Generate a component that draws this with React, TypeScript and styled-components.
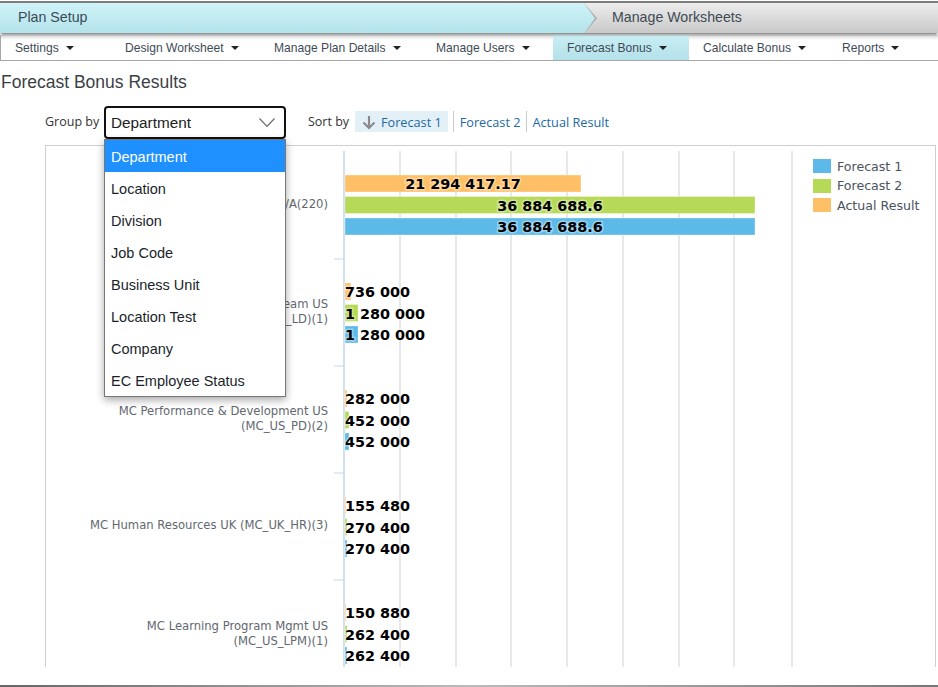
import styled, { createGlobalStyle } from "styled-components"

const GlobalStyle = createGlobalStyle`
  html, body {
    margin: 0;
    height: 687px;
    overflow: hidden;
    background: #fff;
    font-family: "Liberation Sans", Arial, sans-serif;
  }
`

const NAV_ITEMS = [
  { label: "Settings", width: 110 },
  { label: "Design Worksheet", width: 149 },
  { label: "Manage Plan Details", width: 162 },
  { label: "Manage Users", width: 131 },
  { label: "Forecast Bonus", width: 136, active: true },
  { label: "Calculate Bonus", width: 139 },
  { label: "Reports", width: 110 },
]

const GROUP_OPTIONS = [
  "Department",
  "Location",
  "Division",
  "Job Code",
  "Business Unit",
  "Location Test",
  "Company",
  "EC Employee Status",
]

const COLORS = { f1: "#5cb9e8", f2: "#b6d957", actual: "#ffbf66" }
const GRID_X = [400, 456, 511, 567, 623, 679, 734, 792]
const TICKS_Y = [259, 366, 473, 580]

const GROUPS = [
  {
    label: ["N/A(220)"],
    labelY: 208,
    top: 175,
    rows: [
      { v: "21 294 417.17", end: 581, color: COLORS.actual },
      { v: "36 884 688.6", end: 755, color: COLORS.f2 },
      { v: "36 884 688.6", end: 755, color: COLORS.f1 },
    ],
  },
  {
    label: ["MC Leadership Team US", "(MC_US_LD)(1)"],
    labelY: 308,
    top: 283,
    rows: [
      { v: "736 000", end: 351, color: COLORS.actual },
      { v: "1 280 000", end: 358, color: COLORS.f2 },
      { v: "1 280 000", end: 358, color: COLORS.f1 },
    ],
  },
  {
    label: ["MC Performance & Development US", "(MC_US_PD)(2)"],
    labelY: 415,
    top: 390,
    rows: [
      { v: "282 000", end: 347, color: COLORS.actual },
      { v: "452 000", end: 349, color: COLORS.f2 },
      { v: "452 000", end: 349, color: COLORS.f1 },
    ],
  },
  {
    label: ["MC Human Resources UK (MC_UK_HR)(3)"],
    labelY: 529,
    top: 497,
    rows: [
      { v: "155 480", end: 346, color: COLORS.actual },
      { v: "270 400", end: 347, color: COLORS.f2 },
      { v: "270 400", end: 347, color: COLORS.f1 },
    ],
  },
  {
    label: ["MC Learning Program Mgmt US", "(MC_US_LPM)(1)"],
    labelY: 630,
    top: 604,
    rows: [
      { v: "150 880", end: 346, color: COLORS.actual },
      { v: "262 400", end: 347, color: COLORS.f2 },
      { v: "262 400", end: 347, color: COLORS.f1 },
    ],
  },
]

const AXIS_X = 345
const BAR_HEIGHT = 17
const ROW_STEP = 21.5

const BarChart = () => (
  <ChartSvg viewBox="46 146 754 521" width={754} height={521}>
    {GRID_X.map((x) => (
      <line key={x} x1={x} x2={x} y1={151} y2={667} stroke="#dfe1e3" strokeWidth={1.5} />
    ))}
    <line x1={344} x2={344} y1={151} y2={667} stroke="#c5d7e6" strokeWidth={1.5} />
    {TICKS_Y.map((y) => (
      <line key={y} x1={334} x2={344} y1={y} y2={y} stroke="#c5d7e6" strokeWidth={1} />
    ))}
    {GROUPS.map((group) => (
      <g key={group.top}>
        {group.label.map((text, i) => (
          <AxisLabel key={text} x={328} y={group.labelY + i * 15}>
            {text}
          </AxisLabel>
        ))}
        {group.rows.map((row, i) => {
          const y = group.top + i * ROW_STEP
          const wide = row.end > 400
          return (
            <g key={i}>
              <BarRect x={AXIS_X} y={y} width={row.end - AXIS_X} height={BAR_HEIGHT} fill={row.color} />
              <BarValue
                x={wide ? (AXIS_X + row.end) / 2 : AXIS_X}
                y={y + 14.3}
                textAnchor={wide ? "middle" : "start"}
              >
                {row.v}
              </BarValue>
            </g>
          )
        })}
      </g>
    ))}
  </ChartSvg>
)

export default function App() {
  return (
    <Page>
      <GlobalStyle />
      <Steps>
        <StepActive>Plan Setup</StepActive>
        <StepNext>Manage Worksheets</StepNext>
      </Steps>
      <Nav>
        {NAV_ITEMS.map((item) => (
          <NavItem key={item.label} $width={item.width} $active={item.active}>
            {item.label}
            <Caret />
          </NavItem>
        ))}
      </Nav>
      <Title>Forecast Bonus Results</Title>
      <Toolbar>
        <GroupLabel>Group by</GroupLabel>
        <SelectWrap>
          <SelectBox>
            Department
            <svg width="16" height="9" viewBox="0 0 16 9" fill="none" stroke="#666" strokeWidth="1.2">
              <path d="M.5.5 8 8.3 15.5.5" />
            </svg>
          </SelectBox>
          <Menu>
            {GROUP_OPTIONS.map((opt, i) => (
              <MenuItem key={opt} $selected={i === 0}>
                {opt}
              </MenuItem>
            ))}
          </Menu>
        </SelectWrap>
        <SortLabel>Sort by</SortLabel>
        <SortActive>
          <svg width="16" height="16" viewBox="0 0 16 16" fill="none" stroke="#8a8a8a" strokeWidth="2.2">
            <path d="M8 2v12M2.5 8.5 8 14l5.5-5.5" />
          </svg>
          Forecast 1
        </SortActive>
        <SortLink>Forecast 2</SortLink>
        <SortLink>Actual Result</SortLink>
      </Toolbar>
      <ChartPanel>
        <BarChart />
        <Legend>
          <LegendRow $color={COLORS.f1}>Forecast 1</LegendRow>
          <LegendRow $color={COLORS.f2}>Forecast 2</LegendRow>
          <LegendRow $color={COLORS.actual}>Actual Result</LegendRow>
        </Legend>
      </ChartPanel>
      <BottomBar />
    </Page>
  )
}

const Page = styled.div`
  width: 938px;
  height: 687px;
  display: flex;
  flex-direction: column;
  overflow: hidden;
`

const Steps = styled.div`
  display: flex;
  height: 31px;
  margin-top: 1px;
  border-top: 2px solid #7d7d7d;
  box-shadow: 0 3px 2px -1px #8f8f8f;
  position: relative;
  z-index: 1;
`

const StepActive = styled.div`
  width: 584px;
  padding-left: 18px;
  box-sizing: border-box;
  background: linear-gradient(#cff3f8, #b4e3ec);
  color: #3a4a55;
  font-size: 14.2px;
  line-height: 28px;
  position: relative;

  &::before {
    content: "";
    position: absolute;
    top: 0;
    bottom: 0;
    left: 100%;
    width: 13px;
    background: #a9a9a9;
    clip-path: polygon(0 0, 100% 50%, 0 100%);
  }

  &::after {
    content: "";
    position: absolute;
    top: 0;
    bottom: 0;
    left: 100%;
    width: 11px;
    background: linear-gradient(#cff3f8, #b4e3ec);
    clip-path: polygon(0 0, 100% 50%, 0 100%);
  }
`

const StepNext = styled.div`
  flex: 1;
  padding-left: 28px;
  background: linear-gradient(#ececec, #c9c9c9);
  color: #3f4a55;
  font-size: 14.2px;
  line-height: 28px;
`

const Nav = styled.nav`
  display: flex;
  height: 26px;
  margin-top: 2px;
  padding-top: 1px;
  box-sizing: border-box;
  border-left: 1px solid #a8a8a8;
  border-bottom: 1px solid #a8a8a8;
  background: linear-gradient(#d8d8d8, #fff 5px);
`

const NavItem = styled.div<{ $width: number; $active?: boolean }>`
  width: ${(p) => p.$width}px;
  margin-top: -1px;
  padding: 1px 0 0 14px;
  box-sizing: border-box;
  display: flex;
  align-items: center;
  gap: 6px;
  font-size: 12.1px;
  color: #3f4a57;
  ${(p) => p.$active && "background: linear-gradient(#c9eef3, #b4e1ea);"}
`

const Caret = styled.span`
  width: 0;
  height: 0;
  margin-left: 1px;
  border-left: 4px solid transparent;
  border-right: 4px solid transparent;
  border-top: 4px solid #222;
`

const Title = styled.h1`
  margin: 11px 0 0 1px;
  height: 21px;
  font-size: 17.5px;
  line-height: 21px;
  font-weight: 400;
  color: #3a3f45;
`

const Toolbar = styled.div`
  display: flex;
  align-items: center;
  height: 33px;
  margin-top: 13px;
  padding-left: 45px;
  font-family: "Open Sans", sans-serif;
  font-size: 12.5px;
  position: relative;
  z-index: 2;
`

const GroupLabel = styled.span`
  width: 59px;
  margin-bottom: 2px;
  color: #333;
`

const SelectWrap = styled.div`
  position: relative;
  width: 182px;
  height: 33px;
  font-family: "Liberation Sans", sans-serif;
`

const SelectBox = styled.div`
  box-sizing: border-box;
  height: 33px;
  padding: 0 9px 0 5px;
  display: flex;
  align-items: center;
  justify-content: space-between;
  border: 2px solid #111;
  border-radius: 4px;
  background: #fff;
  color: #222;
  font-size: 15.3px;
`

const Menu = styled.div`
  position: absolute;
  top: 33px;
  left: 0;
  width: 182px;
  box-sizing: border-box;
  border: 1px solid #777;
  background: #fff;
  box-shadow: 0 3px 8px rgba(0, 0, 0, 0.35);
  font-size: 14.5px;
`

const MenuItem = styled.div<{ $selected?: boolean }>`
  height: 32px;
  padding: 2px 0 0 6px;
  box-sizing: border-box;
  display: flex;
  align-items: center;
  color: ${(p) => (p.$selected ? "#fff" : "#1a1f2b")};
  background: ${(p) => (p.$selected ? "#1e90ff" : "#fff")};
`

const SortLabel = styled.span`
  margin: 0 0 2px 22px;
  width: 47px;
  color: #333;
`

const SortActive = styled.span`
  height: 21px;
  margin: 0 5px 2px 0;
  padding: 0 6px;
  display: flex;
  align-items: center;
  gap: 4px;
  background: #e4f0f8;
  color: #1b6aa5;
  font-size: 12.7px;
`

const SortLink = styled.span`
  height: 21px;
  margin-bottom: 2px;
  padding-left: 6px;
  padding-right: 5px;
  display: flex;
  align-items: center;
  border-left: 1px solid #c9c9c9;
  color: #1b6aa5;
  font-size: 12.7px;
`

const ChartPanel = styled.section`
  display: flex;
  height: 522px;
  margin: 6px 2px 0 45px;
  box-sizing: border-box;
  border: 1px solid #cfcfcf;
  border-bottom: none;
`

const ChartSvg = styled.svg`
  display: block;
  flex: none;
`

const AxisLabel = styled.text`
  font-family: "DejaVu Sans", sans-serif;
  font-size: 11.6px;
  fill: #626870;
  text-anchor: end;
`

const BarRect = styled.rect`
  stroke: rgba(255, 255, 255, 0.35);
  stroke-width: 1px;
`

const BarValue = styled.text`
  font-family: "DejaVu Sans", sans-serif;
  font-weight: 700;
  font-size: 14.4px;
  fill: #000;
  stroke: rgba(255, 255, 255, 0.4);
  stroke-width: 3px;
  paint-order: stroke;
`

const Legend = styled.div`
  margin: 13px 0 0 13px;
  display: flex;
  flex-direction: column;
  gap: 5.5px;
`

const LegendRow = styled.div<{ $color: string }>`
  display: flex;
  align-items: center;
  gap: 6px;
  height: 14px;
  font-family: "DejaVu Sans", sans-serif;
  font-size: 12.6px;
  color: #4b5360;
  white-space: nowrap;

  &::before {
    content: "";
    width: 18px;
    height: 14px;
    background: ${(p) => p.$color};
  }
`

const BottomBar = styled.div`
  height: 2px;
  margin-top: 18px;
  background: linear-gradient(90deg, #666, #bbb 50%, #777);
`
